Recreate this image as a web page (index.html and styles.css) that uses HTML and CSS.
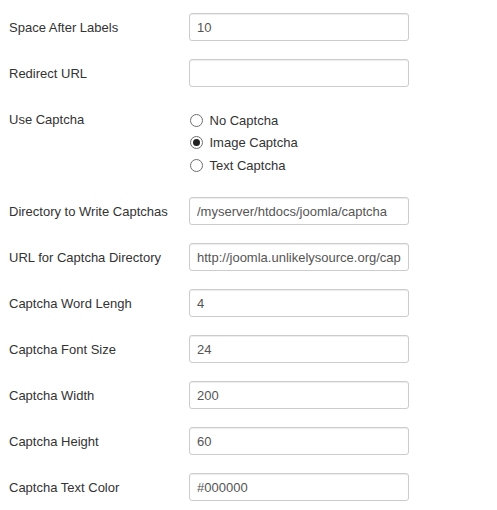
FILE: index.html
```html
<!DOCTYPE html>
<html>
<head>
<meta charset="utf-8">
<link rel="stylesheet" href="styles.css">
</head>
<body>
<form class="form">
  <div class="row"><label class="label">Space After Labels</label><div class="field"><input class="input" type="text" value="10"></div></div>
  <div class="row"><label class="label">Redirect URL</label><div class="field"><input class="input" type="text" value=""></div></div>
  <div class="row row-radios"><label class="label">Use Captcha</label>
    <div class="field radios">
      <div class="radio"><span class="dot"></span><span>No Captcha</span></div>
      <div class="radio"><span class="dot checked"></span><span>Image Captcha</span></div>
      <div class="radio"><span class="dot"></span><span>Text Captcha</span></div>
    </div>
  </div>
  <div class="row"><label class="label">Directory to Write Captchas</label><div class="field"><input class="input" type="text" value="/myserver/htdocs/joomla/captcha"></div></div>
  <div class="row"><label class="label">URL for Captcha Directory</label><div class="field"><input class="input" type="text" value="http://joomla.unlikelysource.org/cap"></div></div>
  <div class="row"><label class="label">Captcha Word Lengh</label><div class="field"><input class="input" type="text" value="4"></div></div>
  <div class="row"><label class="label">Captcha Font Size</label><div class="field"><input class="input" type="text" value="24"></div></div>
  <div class="row"><label class="label">Captcha Width</label><div class="field"><input class="input" type="text" value="200"></div></div>
  <div class="row"><label class="label">Captcha Height</label><div class="field"><input class="input" type="text" value="60"></div></div>
  <div class="row"><label class="label">Captcha Text Color</label><div class="field"><input class="input" type="text" value="#000000"></div></div>
</form>
</body>
</html>
```
FILE: styles.css
```css
html, body {
  margin: 0;
  padding: 0;
  background: #ffffff;
}
body {
  font-family: "Liberation Sans", Arial, sans-serif;
  font-size: 13px;
  color: #333333;
}
.form {
  display: flex;
  flex-direction: column;
  gap: 18px;
  padding: 13px 0 0 9px;
}
.row {
  display: flex;
  align-items: flex-start;
}
.label {
  box-sizing: border-box;
  width: 180px;
  line-height: 28px;
  height: 28px;
  padding-top: 1px;
  white-space: nowrap;
}
.input {
  box-sizing: border-box;
  width: 220px;
  height: 28px;
  margin: 0;
  padding: 0 6px 0 7px;
  border: 1px solid #cccccc;
  border-radius: 3px;
  box-shadow: inset 0 1px 1px rgba(0, 0, 0, 0.075);
  font-family: "Liberation Sans", Arial, sans-serif;
  font-size: 13px;
  color: #555555;
  background: #ffffff;
  outline: none;
}
.row-radios {
  height: 74px;
}
.radios {
  padding-top: 4px;
}
.radio {
  display: flex;
  align-items: center;
  height: 22.5px;
  gap: 7px;
  padding-left: 0.5px;
}
.dot {
  box-sizing: border-box;
  width: 13px;
  height: 13px;
  border: 1px solid #6f6f6f;
  border-radius: 50%;
  background: #ffffff;
  display: flex;
  align-items: center;
  justify-content: center;
}
.dot.checked::after {
  content: "";
  width: 7px;
  height: 7px;
  border-radius: 50%;
  background: #222222;
}
```
